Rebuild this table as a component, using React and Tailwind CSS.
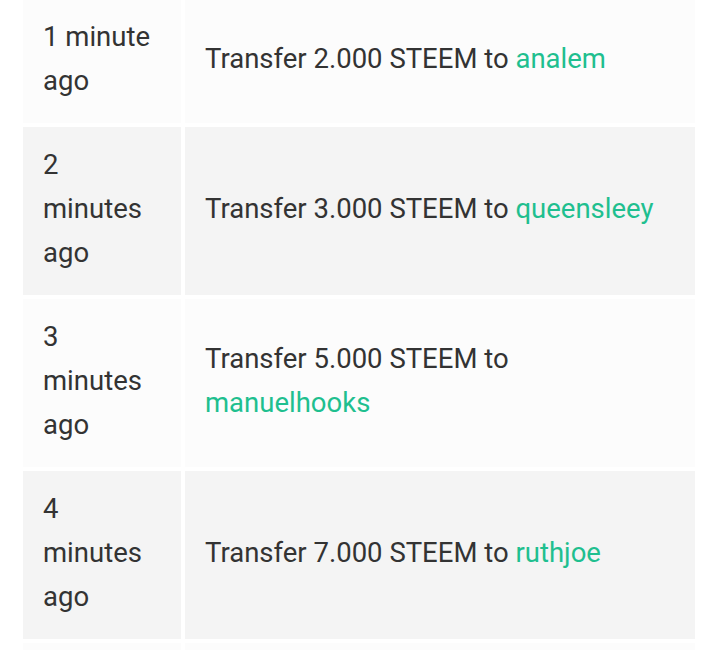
const rows = [
  { time: "1 minute ago", amount: "2.000", to: "analem" },
  { time: "2 minutes ago", amount: "3.000", to: "queensleey" },
  { time: "3 minutes ago", amount: "5.000", to: "manuelhooks" },
  { time: "4 minutes ago", amount: "7.000", to: "ruthjoe" },
];

export default function App() {
  return (
    <div className="h-[650px] overflow-hidden bg-white font-['Roboto',sans-serif] text-[27.5px] leading-[44px] text-[#333333]">
      <div className="ml-[23px] -mt-px grid w-[672px] grid-cols-[158px_510px] gap-1">
        {rows.map((r, i) => (
          <div key={i} className="contents">
            <div className={`px-5 pt-4 pb-5 ${i % 2 ? "bg-[#f4f4f4]" : "bg-[#fcfcfc]"}`}>
              {r.time}
            </div>
            <div className={`flex items-center px-5 pt-4 pb-5 ${i % 2 ? "bg-[#f4f4f4]" : "bg-[#fcfcfc]"}`}>
              <span>
                Transfer {r.amount} STEEM to{" "}
                <a href="#" className="text-[#1fbf8f]">{r.to}</a>
              </span>
            </div>
          </div>
        ))}
        {/* next row, only its top edge is in view */}
        <div className="h-[60px] bg-[#fcfcfc]" />
        <div className="h-[60px] bg-[#fcfcfc]" />
      </div>
    </div>
  );
}
